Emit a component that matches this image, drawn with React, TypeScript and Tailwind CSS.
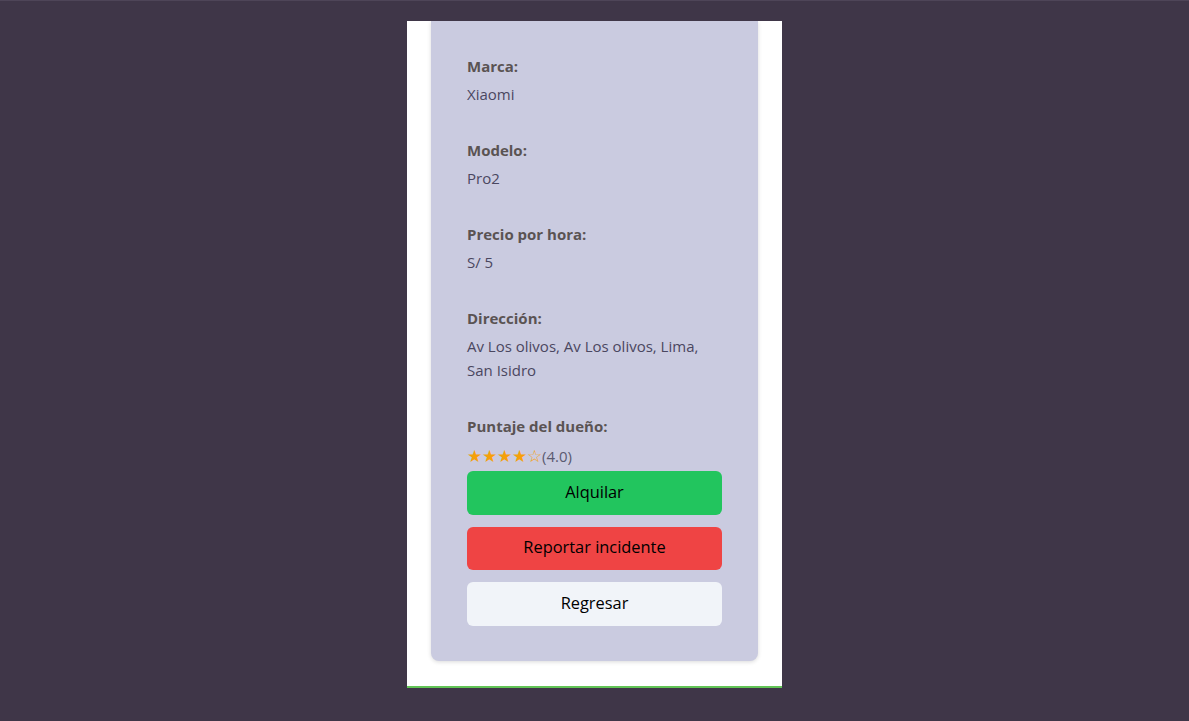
import React from 'react';

const fields = [
  { label: 'Marca:', value: 'Xiaomi' },
  { label: 'Modelo:', value: 'Pro2' },
  { label: 'Precio por hora:', value: 'S/ 5' },
  { label: 'Dirección:', value: 'Av Los olivos, Av Los olivos, Lima, San Isidro' },
];

export default function App() {
  return (
    <div
      className="min-h-[721px] bg-[#3f3648] border-t border-[#4e4558] flex justify-center"
      style={{ fontFamily: '"Open Sans", "Noto Sans", sans-serif' }}
    >
      <div className="mt-[20px] w-[375px] h-[667px] bg-white border-b-2 border-[#62c456] overflow-hidden">
        <div className="mx-6 bg-[#cacbe0] rounded-b-lg shadow-[0_1px_4px_rgba(0,0,0,0.15)] px-9 pt-[33px] pb-[35px]">
          {fields.map((f) => (
            <div key={f.label} className="mb-8">
              <div className="text-[15px] leading-6 font-bold text-[#5a5353]">{f.label}</div>
              <div className="mt-1 text-[15px] leading-6 text-[#4a4760]">{f.value}</div>
            </div>
          ))}
          <div>
            <div className="text-[15px] leading-6 font-bold text-[#5a5353]">Puntaje del dueño:</div>
            <div className="mt-2 h-5 flex items-center text-[15px] text-[#5a5a70]">
              <span className="text-[17px] leading-5 text-[#f5a00a]">★★★★☆</span>
              <span className="leading-5">(4.0)</span>
            </div>
          </div>
          <div className="mt-[5px] flex flex-col gap-3">
            <button className="h-[43.5px] w-full rounded-md bg-[#22c55e] pb-[1px] text-[16.4px] text-black">Alquilar</button>
            <button className="h-[43.5px] w-full rounded-md bg-[#ef4444] pb-[1px] text-[16.4px] text-black">Reportar incidente</button>
            <button className="h-[43.5px] w-full rounded-md bg-[#f1f4f9] pb-[1px] text-[16.4px] text-black">Regresar</button>
          </div>
        </div>
      </div>
    </div>
  );
}
